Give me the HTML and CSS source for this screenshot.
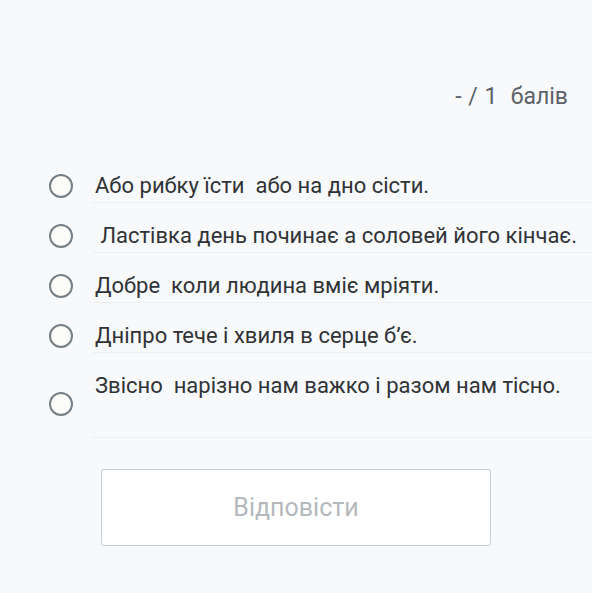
FILE: index.html
```
<!DOCTYPE html>
<html lang="uk">
<head>
<meta charset="utf-8">
<link rel="stylesheet" href="styles.css">
</head>
<body>
<div class="page">
  <div class="score">- / 1  балів</div>
  <ul class="options">
    <li class="option"><span class="radio-wrap"><span class="radio"></span></span><span class="label"><span class="text">Або рибку їсти  або на дно сісти.</span></span></li>
    <li class="option"><span class="radio-wrap"><span class="radio"></span></span><span class="label"><span class="text"> Ластівка день починає а соловей його кінчає.</span></span></li>
    <li class="option"><span class="radio-wrap"><span class="radio"></span></span><span class="label"><span class="text">Добре  коли людина вміє мріяти.</span></span></li>
    <li class="option"><span class="radio-wrap"><span class="radio"></span></span><span class="label"><span class="text">Дніпро тече і хвиля в серце б’є.</span></span></li>
    <li class="option"><span class="radio-wrap"><span class="radio"></span></span><span class="label"><span class="text">Звісно  нарізно нам важко і разом нам тісно.</span><span class="extra"></span></span></li>
  </ul>
  <div class="actions">
    <button class="submit" type="button">Відповісти</button>
  </div>
</div>
</body>
</html>
```

FILE: styles.css
```
html, body {
  margin: 0;
  padding: 0;
  background: #f8f9fb;
}
body {
  font-family: Roboto, "Noto Sans", sans-serif;
  color: #303336;
}
.page {
  width: 592px;
  height: 593px;
  overflow: hidden;
}
.score {
  box-sizing: border-box;
  height: 153px;
  padding: 83px 24px 0 0;
  text-align: right;
  font-size: 23px;
  line-height: 28px;
  word-spacing: 1px;
  color: #5b6168;
  white-space: pre;
}
.options {
  list-style: none;
  margin: 0;
  padding: 0 0 0 49px;
}
.option {
  display: flex;
  align-items: stretch;
  gap: 20px;
}
.radio-wrap {
  display: flex;
  align-items: center;
  padding: 21px 0 5px;
}
.radio {
  width: 24px;
  height: 24px;
  box-sizing: border-box;
  border: 2.5px solid #748086;
  border-radius: 50%;
  background: #fbfbf8;
}
.label {
  flex: 1;
  display: flex;
  flex-direction: column;
  padding: 21px 0 4px 2px;
  border-bottom: 1px solid #eceef1;
}
.text {
  font-size: 22px;
  line-height: 24px;
  white-space: pre-wrap;
}
.extra {
  height: 35px;
}
.actions {
  display: flex;
  justify-content: center;
  padding-top: 31px;
}
.submit {
  width: 390px;
  height: 77px;
  background: #ffffff;
  border: 1px solid #c9cdd1;
  border-radius: 3px;
  font-family: Roboto, "Noto Sans", sans-serif;
  font-size: 25px;
  color: #b3b8bc;
  padding: 0;
}
```
